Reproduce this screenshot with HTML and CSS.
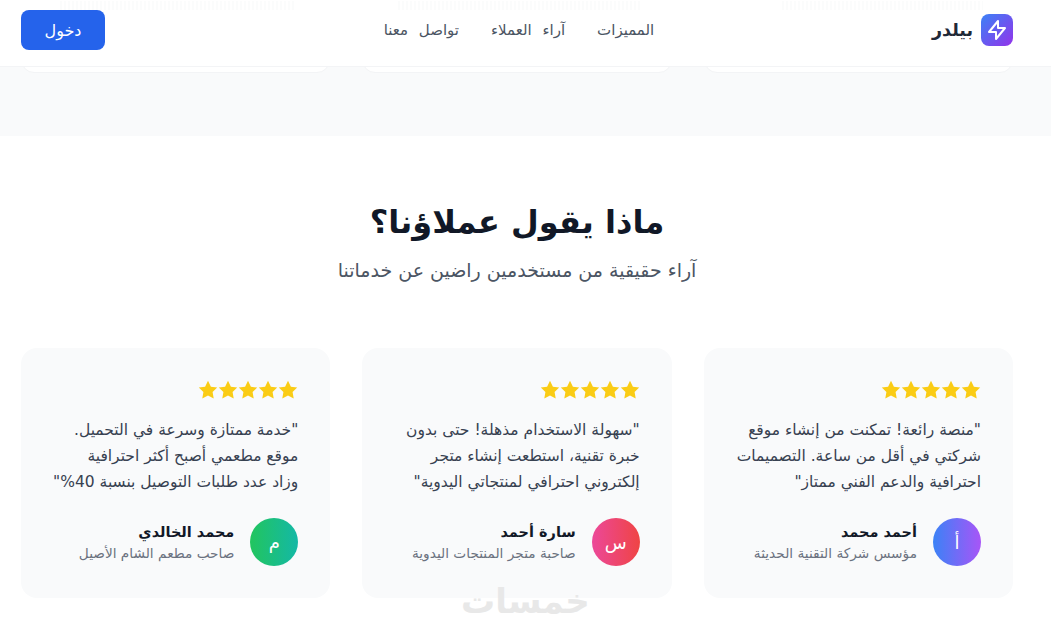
FILE: index.html
```html
<!DOCTYPE html>
<html lang="ar" dir="rtl">
<head>
<meta charset="utf-8">
<title>بيلدر</title>
<link rel="stylesheet" href="styles.css">
</head>
<body>
<header class="nav">
  <span class="ghost ghost-right"></span>
  <span class="ghost ghost-center"></span>
  <span class="ghost ghost-left"></span>
  <a class="brand" href="#">
    <span class="brand-mark">
      <svg viewBox="0 0 24 24" width="24" height="24" fill="none" stroke="#fff" stroke-width="2" stroke-linecap="round" stroke-linejoin="round"><path d="M13 10V3L4 14h7v7l9-11h-7z"/></svg>
    </span>
    <span class="brand-name">بيلدر</span>
  </a>
  <nav class="nav-links">
    <a href="#">المميزات</a>
    <a href="#">آراء العملاء</a>
    <a href="#">تواصل معنا</a>
  </nav>
  <a class="login" href="#">دخول</a>
</header>

<section class="features">
  <div class="feature-stub"></div>
  <div class="feature-stub"></div>
  <div class="feature-stub"></div>
</section>

<section class="testimonials">
  <h2 class="title">ماذا يقول عملاؤنا؟</h2>
  <p class="subtitle">آراء حقيقية من مستخدمين راضين عن خدماتنا</p>
  <div class="cards">
    <article class="card">
      <div class="stars">
        <svg viewBox="0 0 20 20"><path d="M10 .8l2.9 5.9 6.3.9-4.6 4.4 1.1 6.4-5.7-3-5.7 3 1.1-6.4L.8 7.6l6.3-.9z"/></svg>
        <svg viewBox="0 0 20 20"><path d="M10 .8l2.9 5.9 6.3.9-4.6 4.4 1.1 6.4-5.7-3-5.7 3 1.1-6.4L.8 7.6l6.3-.9z"/></svg>
        <svg viewBox="0 0 20 20"><path d="M10 .8l2.9 5.9 6.3.9-4.6 4.4 1.1 6.4-5.7-3-5.7 3 1.1-6.4L.8 7.6l6.3-.9z"/></svg>
        <svg viewBox="0 0 20 20"><path d="M10 .8l2.9 5.9 6.3.9-4.6 4.4 1.1 6.4-5.7-3-5.7 3 1.1-6.4L.8 7.6l6.3-.9z"/></svg>
        <svg viewBox="0 0 20 20"><path d="M10 .8l2.9 5.9 6.3.9-4.6 4.4 1.1 6.4-5.7-3-5.7 3 1.1-6.4L.8 7.6l6.3-.9z"/></svg>
      </div>
      <p class="quote"><span>"منصة رائعة! تمكنت من إنشاء موقع</span><span>شركتي في أقل من ساعة. التصميمات</span><span>احترافية والدعم الفني ممتاز"</span></p>
      <div class="person">
        <span class="avatar avatar-blue">أ</span>
        <div>
          <div class="person-name">أحمد محمد</div>
          <div class="person-role">مؤسس شركة التقنية الحديثة</div>
        </div>
      </div>
    </article>
    <article class="card">
      <div class="stars">
        <svg viewBox="0 0 20 20"><path d="M10 .8l2.9 5.9 6.3.9-4.6 4.4 1.1 6.4-5.7-3-5.7 3 1.1-6.4L.8 7.6l6.3-.9z"/></svg>
        <svg viewBox="0 0 20 20"><path d="M10 .8l2.9 5.9 6.3.9-4.6 4.4 1.1 6.4-5.7-3-5.7 3 1.1-6.4L.8 7.6l6.3-.9z"/></svg>
        <svg viewBox="0 0 20 20"><path d="M10 .8l2.9 5.9 6.3.9-4.6 4.4 1.1 6.4-5.7-3-5.7 3 1.1-6.4L.8 7.6l6.3-.9z"/></svg>
        <svg viewBox="0 0 20 20"><path d="M10 .8l2.9 5.9 6.3.9-4.6 4.4 1.1 6.4-5.7-3-5.7 3 1.1-6.4L.8 7.6l6.3-.9z"/></svg>
        <svg viewBox="0 0 20 20"><path d="M10 .8l2.9 5.9 6.3.9-4.6 4.4 1.1 6.4-5.7-3-5.7 3 1.1-6.4L.8 7.6l6.3-.9z"/></svg>
      </div>
      <p class="quote"><span>"سهولة الاستخدام مذهلة! حتى بدون</span><span>خبرة تقنية، استطعت إنشاء متجر</span><span>إلكتروني احترافي لمنتجاتي اليدوية"</span></p>
      <div class="person">
        <span class="avatar avatar-pink">س</span>
        <div>
          <div class="person-name">سارة أحمد</div>
          <div class="person-role">صاحبة متجر المنتجات اليدوية</div>
        </div>
      </div>
    </article>
    <article class="card">
      <div class="stars">
        <svg viewBox="0 0 20 20"><path d="M10 .8l2.9 5.9 6.3.9-4.6 4.4 1.1 6.4-5.7-3-5.7 3 1.1-6.4L.8 7.6l6.3-.9z"/></svg>
        <svg viewBox="0 0 20 20"><path d="M10 .8l2.9 5.9 6.3.9-4.6 4.4 1.1 6.4-5.7-3-5.7 3 1.1-6.4L.8 7.6l6.3-.9z"/></svg>
        <svg viewBox="0 0 20 20"><path d="M10 .8l2.9 5.9 6.3.9-4.6 4.4 1.1 6.4-5.7-3-5.7 3 1.1-6.4L.8 7.6l6.3-.9z"/></svg>
        <svg viewBox="0 0 20 20"><path d="M10 .8l2.9 5.9 6.3.9-4.6 4.4 1.1 6.4-5.7-3-5.7 3 1.1-6.4L.8 7.6l6.3-.9z"/></svg>
        <svg viewBox="0 0 20 20"><path d="M10 .8l2.9 5.9 6.3.9-4.6 4.4 1.1 6.4-5.7-3-5.7 3 1.1-6.4L.8 7.6l6.3-.9z"/></svg>
      </div>
      <p class="quote"><span>"خدمة ممتازة وسرعة في التحميل.</span><span>موقع مطعمي أصبح أكثر احترافية</span><span>وزاد عدد طلبات التوصيل بنسبة 40%"</span></p>
      <div class="person">
        <span class="avatar avatar-green">م</span>
        <div>
          <div class="person-name">محمد الخالدي</div>
          <div class="person-role">صاحب مطعم الشام الأصيل</div>
        </div>
      </div>
    </article>
  </div>
</section>
<div class="watermark">خمسات</div>
</body>
</html>
```
FILE: styles.css
```css
* { box-sizing: border-box; }
html, body { height: 100%; }
body {
  margin: 0;
  overflow: hidden;
  background: #fff;
  color: #111827;
  font-family: "DejaVu Sans", "Noto Sans", sans-serif;
}
a { text-decoration: none; color: inherit; }
.nav {
  position: relative;
  z-index: 2;
  height: 67px;
  padding: 0 38px 6px 21px;
  display: flex;
  align-items: center;
  justify-content: space-between;
  background: #fff;
  border-bottom: 1px solid #f3f4f6;
}
.ghost {
  position: absolute;
  top: 1px;
  height: 9px;
  background-image: repeating-linear-gradient(90deg, #fbfcfc 0 2px, transparent 2px 4px);
}
.ghost-right { left: 782px; width: 201px; }
.ghost-center { left: 398px; width: 242px; }
.ghost-left { left: 60px; width: 235px; }
.brand { display: flex; align-items: center; gap: 8px; width: 80px; }
.brand-mark {
  width: 32px; height: 32px;
  flex: none;
  border-radius: 8px;
  display: flex; align-items: center; justify-content: center;
  background: linear-gradient(135deg, #3b82f6, #9333ea);
}
.brand-name { font-size: 17.5px; font-weight: 700; color: #1f2937; white-space: nowrap; }
.nav-links { display: flex; gap: 32px; font-size: 15px; word-spacing: 6px; color: #4b5563; }
.login {
  width: 84px; height: 40px;
  display: flex; align-items: center; justify-content: center;
  border-radius: 8px;
  background: #2563eb;
  color: #fff;
  font-size: 16px;
}
.features {
  height: 69px;
  padding: 0 38px 0 21px;
  display: grid;
  grid-template-columns: repeat(3, 1fr);
  gap: 32px;
  align-items: start;
  background: #f9fafb;
}
.feature-stub {
  height: 26px;
  margin-top: -20px;
  background: #fff;
  border: 1px solid #f3f4f6;
  border-radius: 16px;
}
.testimonials { padding: 66px 38px 0 21px; }
.title { margin: 0; text-align: center; font-size: 32px; line-height: 40px; font-weight: 700; color: #111827; }
.subtitle { margin: 14px 0 0; text-align: center; font-size: 19px; line-height: 28px; color: #4b5563; }
.cards { margin-top: 64px; display: grid; grid-template-columns: repeat(3, 1fr); gap: 32px; }
.card { height: 250px; padding: 32px; border-radius: 16px; background: #f9fafb; }
.stars { display: flex; gap: 0; height: 20px; }
.stars svg { width: 20px; height: 20px; fill: #facc15; }
.quote { margin: 17px 0 23px; font-size: 15.5px; line-height: 26px; color: #374151; }
.quote span { display: block; white-space: nowrap; }
.person { display: flex; align-items: center; gap: 16px; }
.avatar {
  width: 48px; height: 48px; flex: none;
  border-radius: 50%;
  display: flex; align-items: center; justify-content: center;
  color: #fff; font-size: 18px;
}
.avatar-blue { background: linear-gradient(90deg, #3b82f6, #a855f7); }
.avatar-pink { background: linear-gradient(90deg, #ec4899, #ef4444); }
.avatar-green { background: linear-gradient(90deg, #22c55e, #14b8a6); }
.person-name { font-size: 14.5px; font-weight: 700; line-height: 22px; color: #111827; }
.person-role { font-size: 13.7px; line-height: 20px; color: #6b7280; }
.watermark {
  position: absolute;
  left: 461px; top: 579px;
  font-size: 34px;
  font-weight: 700;
  line-height: 44px;
  color: #e8e8e8;
}
```
